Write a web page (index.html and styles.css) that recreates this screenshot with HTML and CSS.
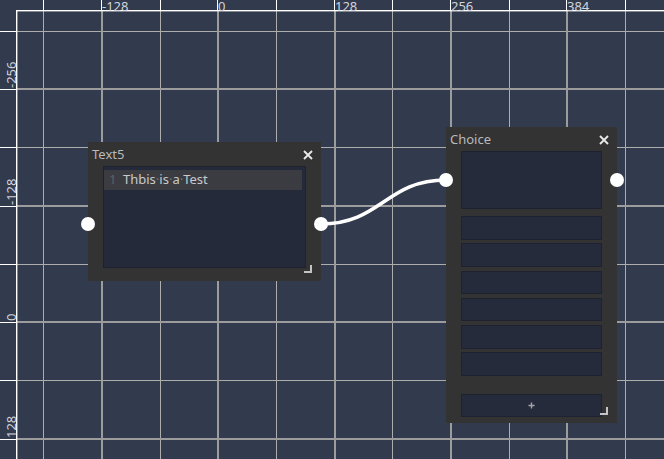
FILE: index.html
```html
<!DOCTYPE html>
<html lang="en">
<head>
<meta charset="utf-8">
<title>Graph</title>
<link rel="stylesheet" href="styles.css">
</head>
<body>
<div class="graph">
  <svg class="grid" width="664" height="459" viewBox="0 0 664 459">
    <g class="minor">
      <rect x="43" y="11" width="1" height="448"/>
      <rect x="160" y="11" width="1" height="448"/>
      <rect x="276" y="11" width="1" height="448"/>
      <rect x="392" y="11" width="1" height="448"/>
      <rect x="509" y="11" width="1" height="448"/>
      <rect x="625" y="11" width="1" height="448"/>
      <rect x="17" y="31" width="647" height="1"/>
      <rect x="17" y="147" width="647" height="1"/>
      <rect x="17" y="264" width="647" height="1"/>
      <rect x="17" y="380" width="647" height="1"/>
    </g>
    <g class="major">
      <rect x="101" y="11" width="2" height="448"/>
      <rect x="217" y="11" width="2" height="448"/>
      <rect x="334" y="11" width="2" height="448"/>
      <rect x="450" y="11" width="2" height="448"/>
      <rect x="566" y="11" width="2" height="448"/>
      <rect x="17" y="88" width="647" height="2"/>
      <rect x="17" y="205" width="647" height="2"/>
      <rect x="17" y="321" width="647" height="2"/>
      <rect x="17" y="438" width="647" height="2"/>
    </g>
    <g class="ruler">
      <rect x="16" y="10" width="648" height="1.4"/>
      <rect x="16" y="10" width="1.4" height="449"/>
      <rect x="43" y="0" width="1" height="10"/>
      <rect x="101" y="0" width="1" height="10"/>
      <rect x="160" y="0" width="1" height="10"/>
      <rect x="217" y="0" width="1" height="10"/>
      <rect x="276" y="0" width="1" height="10"/>
      <rect x="334" y="0" width="1" height="10"/>
      <rect x="392" y="0" width="1" height="10"/>
      <rect x="450" y="0" width="1" height="10"/>
      <rect x="509" y="0" width="1" height="10"/>
      <rect x="566" y="0" width="1" height="10"/>
      <rect x="625" y="0" width="1" height="10"/>
      <rect x="0" y="31" width="16" height="1"/>
      <rect x="0" y="89" width="16" height="1"/>
      <rect x="0" y="147" width="16" height="1"/>
      <rect x="0" y="206" width="16" height="1"/>
      <rect x="0" y="264" width="16" height="1"/>
      <rect x="0" y="322" width="16" height="1"/>
      <rect x="0" y="380" width="16" height="1"/>
      <rect x="0" y="439" width="16" height="1"/>
    </g>
    <g class="ruler-labels">
      <text x="102" y="10.5">-128</text>
      <text x="218" y="10.5">0</text>
      <text x="335" y="10.5">128</text>
      <text x="451" y="10.5">256</text>
      <text x="567" y="10.5">384</text>
      <text x="15.6" y="88" transform="rotate(-90 15.6 88)">-256</text>
      <text x="15.6" y="205" transform="rotate(-90 15.6 205)">-128</text>
      <text x="15.6" y="321" transform="rotate(-90 15.6 321)">0</text>
      <text x="15.6" y="438" transform="rotate(-90 15.6 438)">128</text>
    </g>
  </svg>

  <svg class="wires" width="664" height="459" viewBox="0 0 664 459">
    <path d="M321 224 C 381 224 386 180 446 180"/>
  </svg>

  <div class="node node-text">
    <div class="node-head">
      <span class="node-title">Text5</span>
      <svg class="close" width="10" height="10" viewBox="0 0 10 10"><path d="M1 1 L9 9 M9 1 L1 9"/></svg>
    </div>
    <div class="node-body">
      <div class="editor">
        <div class="line current"><span class="ln">1</span><span class="code">Thbis<span class="ws">·</span>is<span class="ws">·</span>a<span class="ws">·</span>Test</span></div>
      </div>
    </div>
    <span class="port port-in"></span>
    <span class="port port-out"></span>
    <span class="resize"></span>
  </div>

  <div class="node node-choice">
    <div class="node-head">
      <span class="node-title">Choice</span>
      <svg class="close" width="10" height="10" viewBox="0 0 10 10"><path d="M1 1 L9 9 M9 1 L1 9"/></svg>
    </div>
    <div class="node-body">
      <div class="panel choice-main"></div>
      <div class="options">
        <div class="panel option"></div>
        <div class="panel option"></div>
        <div class="panel option"></div>
        <div class="panel option"></div>
        <div class="panel option"></div>
        <div class="panel option"></div>
      </div>
      <div class="panel add-btn"><svg width="7" height="7" viewBox="0 0 7 7"><path d="M3.5 0.5 V6.5 M0.5 3.5 H6.5"/></svg></div>
    </div>
    <span class="port port-in"></span>
    <span class="port port-out"></span>
    <span class="resize"></span>
  </div>
</div>
</body>
</html>
```

FILE: styles.css
```css
html, body {
  margin: 0;
  padding: 0;
  background: #323a4e;
}

.graph {
  position: relative;
  width: 664px;
  height: 459px;
  overflow: hidden;
  background: #323a4e;
  font-family: "Noto Sans", "Open Sans", sans-serif;
  font-size: 13px;
}

.grid, .wires {
  position: absolute;
  left: 0;
  top: 0;
}

.grid .minor { fill: #adadad; }
.grid .major { fill: #9c9c9c; }
.grid .ruler { fill: #ffffff; }
.grid .ruler-labels {
  fill: #d2d4d9;
  font-family: "Noto Sans", "Open Sans", sans-serif;
  font-size: 13px;
}

.wires path {
  fill: none;
  stroke: #ffffff;
  stroke-width: 3.6;
  stroke-linecap: round;
}

.node {
  position: absolute;
  box-sizing: border-box;
  display: flex;
  flex-direction: column;
  background: #333333;
}

.node-text {
  left: 88px;
  top: 142px;
  width: 233px;
  height: 139px;
}

.node-choice {
  left: 446px;
  top: 127px;
  width: 171px;
  height: 296px;
}

.node-head {
  height: 24px;
  box-sizing: border-box;
  padding: 4px 8px 0 4px;
  display: flex;
  justify-content: space-between;
  align-items: flex-start;
  line-height: 16px;
}

.node-title {
  color: #b9b9b9;
}

.close {
  margin-top: 4px;
}

.close path {
  stroke: #e8e8e8;
  stroke-width: 1.9;
  fill: none;
}

.node-body {
  flex: 1;
  display: flex;
  flex-direction: column;
  padding: 0 15px;
}

.node-text .node-body {
  padding-bottom: 13px;
}

.editor {
  flex: 1;
  box-sizing: border-box;
  background: #252a3a;
  border: 1px solid #1d2130;
  padding: 3px 3px 0 0;
}

.line {
  display: flex;
  height: 20px;
  line-height: 18px;
}

.line.current {
  background: #3b3c42;
}

.ln {
  width: 19px;
  box-sizing: border-box;
  padding-left: 5px;
  color: #5d6068;
}

.code {
  color: #c9c9c9;
  white-space: pre;
}

.ws {
  color: #74767c;
}

.panel {
  box-sizing: border-box;
  background: #262b3b;
  border: 1px solid #1e2230;
}

.choice-main {
  height: 58px;
}

.options {
  margin-top: 7px;
  display: flex;
  flex-direction: column;
  gap: 3.8px;
}

.option {
  height: 23.5px;
}

.add-btn {
  margin-top: 18px;
  height: 23px;
  display: flex;
  align-items: center;
  justify-content: center;
}

.add-btn path {
  stroke: #a4a6ab;
  stroke-width: 1.4;
  fill: none;
}

.port {
  position: absolute;
  width: 14px;
  height: 14px;
  border-radius: 50%;
  background: #ffffff;
}

.node-text .port { top: 75px; }
.node-choice .port { top: 46px; }

.port-in { left: -7px; }
.port-out { right: -7px; }

.resize {
  position: absolute;
  right: 9px;
  bottom: 8px;
  width: 8px;
  height: 8px;
  box-sizing: border-box;
  border-right: 2px solid #c4c4c4;
  border-bottom: 2px solid #c4c4c4;
}
```
